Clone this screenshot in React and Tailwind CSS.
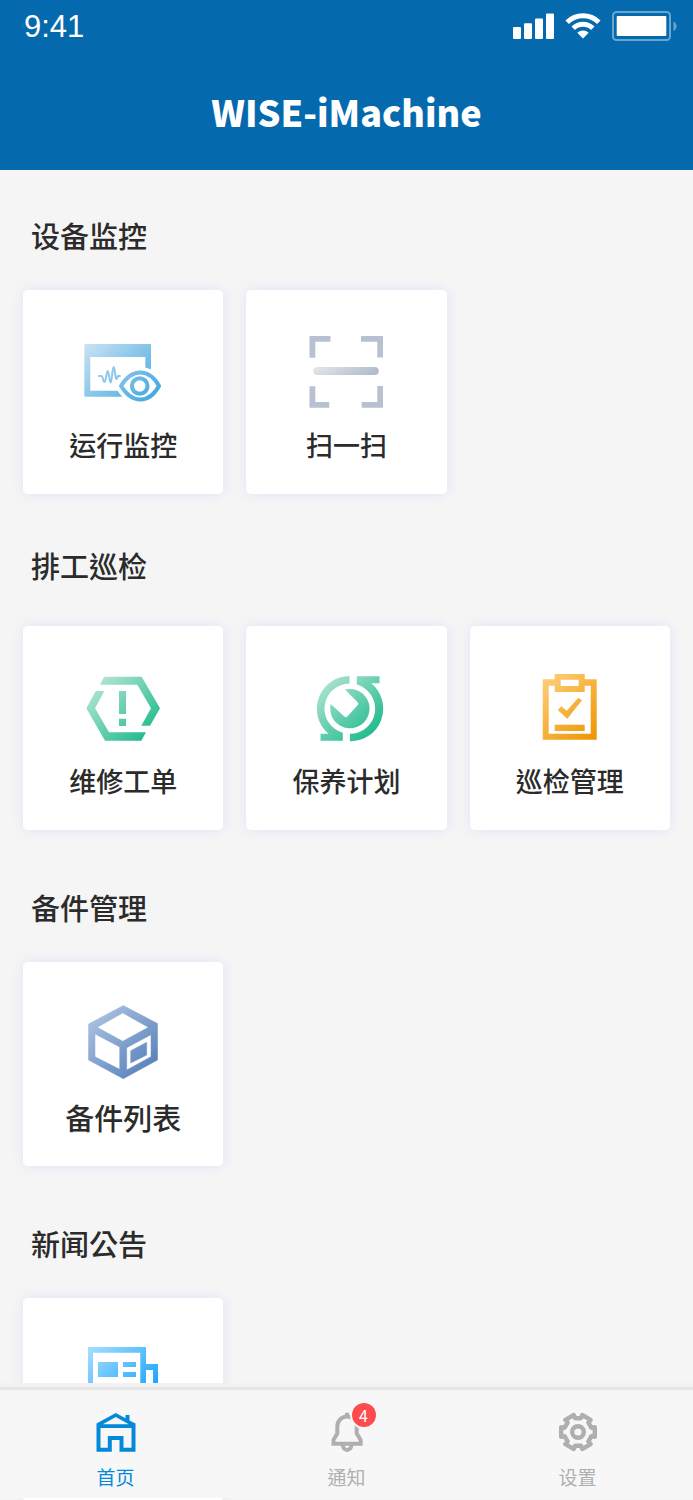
import React from 'react';

// Dégradé diagonal partagé par les icônes
const Gradient = ({ id, from, to }) => (
  <defs>
    <linearGradient id={id} x1="8" y1="8" x2="66" y2="70" gradientUnits="userSpaceOnUse">
      <stop offset="0" stopColor={from} />
      <stop offset="1" stopColor={to} />
    </linearGradient>
  </defs>
);

const IconBox = ({ children }) => (
  <svg viewBox="0 0 80 80" className="w-20 h-20" aria-hidden="true">
    {children}
  </svg>
);

const MonitorIcon = () => (
  <IconBox>
    <Gradient id="monitor" from="#c8e1f2" to="#42a8e0" />
    <path fill="url(#monitor)" fillRule="evenodd" d="M2.3 11H67a1 1 0 0 1 1 1v51.7H2.3a1 1 0 0 1-1-1V12a1 1 0 0 1 1-1zM7.3 24v33.7h55V24z" />
    <path fill="none" stroke="url(#monitor)" strokeWidth="2" strokeLinecap="round" strokeLinejoin="round" d="M16 43h2.500c1.500 0 1.500 6 3 6s2-11 3.200-11 1.700 11.500 3 11.500 1.500-15.500 3-15.500 1.200 12 2.600 12c1 0 1-3 2-3h1.500" />
    <path fill="#fff" stroke="#fff" strokeWidth="11" strokeLinejoin="round" d="M38 53C49 35 66 35 76 53C66 71 49 71 38 53z" />
    <path fill="none" stroke="url(#monitor)" strokeWidth="4" strokeLinejoin="round" d="M38 53C49 35 66 35 76 53C66 71 49 71 38 53z" />
    <circle cx="56.700" cy="53" r="7.800" fill="none" stroke="url(#monitor)" strokeWidth="4" />
  </IconBox>
);

const ScanIcon = () => (
  <IconBox>
    <defs>
      <linearGradient id="scan" x1="0" x2="1" y1="0" y2="0.200">
        <stop offset="0" stopColor="#e4e8ec" />
        <stop offset="1" stopColor="#b3bdcd" />
      </linearGradient>
    </defs>
    <path fill="#b8c1d1" d="M3.500 3h21v5.700H9.300v16H3.500zM55 3h22v21.500h-5.700V8.700H55zM3.500 53.300h5.800V69h14v5.700H3.500zM71.300 53h5.700v21.700H55.700V69h15.600z" />
    <rect x="7.200" y="34" width="65.600" height="8" rx="4" fill="url(#scan)" />
  </IconBox>
);

const RepairIcon = () => (
  <IconBox>
    <Gradient id="repair" from="#c0e9dc" to="#1cb98c" />
    <g fill="url(#repair)">
      <path d="M21 7.700H58.700L77 39.300L67 56.700H58.300L68 39.300L54.300 15.700H17z" />
      <path d="M12.700 22H21.300L12 39.300L26 63.300H63L58.300 71.700H22L3.300 39.300z" />
      <path d="M36 22h7v23h-7zM36 49.700h7V57h-7z" />
    </g>
  </IconBox>
);

const MaintainIcon = () => (
  <IconBox>
    <Gradient id="maintain" from="#c0e9dc" to="#1cb98c" />
    <g fill="url(#maintain)">
      <path d="M43.500 7v7.600A25 25 0 0 0 36.800 63.700V71.700H14.500V64.700H22.500A32.700 32.700 0 0 1 43.500 7z" />
      <path d="M43.900 72.300V64.700A25 25 0 0 0 50.800 15.600V7.300H73.500V14.300H65.200A32.700 32.700 0 0 1 43.900 72.300z" />
      <path d="M39 20.500A19.700 19.700 0 1 1 24.700 35L38.300 47.600q1.500 1.200 3 0L51.600 36.300q1.500-1.600 0-3.100z" />
    </g>
  </IconBox>
);

const InspectIcon = () => (
  <IconBox>
    <Gradient id="inspect" from="#ffd180" to="#ee9500" />
    <g fill="url(#inspect)">
      <path fillRule="evenodd" d="M12.700 10.300h12V5h30v5.300h12v60.400h-54zM30.700 10.700V17h18v-6.300zM18.700 16.700v48h42v-48h-6V23h-30v-6.300z" />
      <path d="M27.700 41L31.300 37.300L36.700 41.700L48.300 28.700L52 31.300L37.300 49.700z" />
      <path d="M24.700 55.700h30V62h-30z" />
    </g>
  </IconBox>
);

const PartsIcon = () => (
  <IconBox>
    <Gradient id="parts" from="#adc3e2" to="#5680ba" />
    <path
      fill="url(#parts)"
      fillRule="evenodd"
      stroke="url(#parts)"
      strokeWidth="0.500"
      d="M40.300 0.500L74.500 18.500V55L40.300 73.700L5.500 55V19zM39.700 8L14.300 22.300L39.700 36.300L65.300 22.300zM12 29V51.700L36.700 64.300V42zM68 29.700L43.700 42.700V65L68 51.700zM47.700 45.700L63.700 37.300V50L47.700 58z"
    />
  </IconBox>
);

const NewsIcon = () => (
  <IconBox>
    <Gradient id="news" from="#a3dbff" to="#009cf8" />
    <g fill="url(#news)">
      <path fillRule="evenodd" d="M5 6h58v17h12v49H5zM10 11.700V66h47.300V11.700zM63 29v37h7V29z" />
      <path d="M15 21h20v15H15zM40 21h13v5H40zM40 31h13v5H40zM15 44h38v5H15z" />
    </g>
  </IconBox>
);

const HomeIcon = () => (
  <svg viewBox="0 0 40 40" className="w-10 h-10" fill="currentColor" aria-hidden="true">
    <path
      fillRule="evenodd"
      d="M19.800 1L29.500 6.200V3h4v5.400L39.500 11.500V39.700H23.500V28H15.800V39.700H0.500V11.500zM19.800 5L6.800 12.200H32.800zM4.500 16V35.700H11.800V24H27.500V35.700H35.500V16z"
    />
  </svg>
);

const BellIcon = () => (
  <svg viewBox="0 0 40 40" className="w-10 h-10" fill="none" stroke="currentColor" strokeWidth="4" aria-hidden="true">
    <path d="M20 0.700V5M6.500 31.800V28L10.300 21.500V14.500A9.700 10 0 0 1 29.700 14.500V21.500L33.700 28V31.800z" />
    <path d="M15.800 33C16 39.500 24.200 39.500 24.400 33" />
  </svg>
);

// Contour de l'engrenage : six dents
const gearPoints = [0, 60, 120, 180, 240, 300]
  .flatMap((a) => [[a - 16, 17.5], [a + 16, 17.5], [a + 18, 14], [a + 42, 14]])
  .map(([a, r]) => {
    const rad = (a * Math.PI) / 180;
    return `${(20 + r * Math.cos(rad)).toFixed(1)},${(20 + r * Math.sin(rad)).toFixed(1)}`;
  })
  .join(' ');

const GearIcon = () => (
  <svg viewBox="0 0 40 40" className="w-10 h-10" fill="none" stroke="currentColor" strokeWidth="4.400" strokeLinejoin="round" aria-hidden="true">
    <polygon points={gearPoints} />
    <circle cx="20" cy="20" r="5.800" />
  </svg>
);

const sections = [
  {
    title: '设备监控',
    items: [
      { label: '运行监控', Icon: MonitorIcon },
      { label: '扫一扫', Icon: ScanIcon },
    ],
  },
  {
    title: '排工巡检',
    spaced: true,
    items: [
      { label: '维修工单', Icon: RepairIcon },
      { label: '保养计划', Icon: MaintainIcon },
      { label: '巡检管理', Icon: InspectIcon },
    ],
  },
  {
    title: '备件管理',
    items: [{ label: '备件列表', Icon: PartsIcon, large: true }],
  },
  {
    title: '新闻公告',
    items: [{ Icon: NewsIcon }],
  },
];

const tabs = [
  { label: '首页', Icon: HomeIcon, active: true },
  { label: '通知', Icon: BellIcon, badge: 4 },
  { label: '设置', Icon: GearIcon },
];

const StatusBar = () => (
  <div className="flex h-[52px] items-center justify-between pl-6 pr-4">
    <span className="font-['Liberation_Sans',sans-serif] text-[31px] leading-none">9:41</span>
    <div className="flex items-center gap-[11px]">
      <svg viewBox="0 0 42 26" className="w-[42px] h-[26px]" fill="currentColor" aria-hidden="true">
        <rect x="1" y="14" width="8" height="12" rx="1" />
        <rect x="12" y="10.300" width="8" height="15.700" rx="1" />
        <rect x="23" y="5.500" width="8" height="20.500" rx="1" />
        <rect x="34" y="0.500" width="8" height="25.500" rx="1" />
      </svg>
      <svg viewBox="0 0 36 26" className="w-9 h-[26px]" aria-hidden="true">
        <g fill="none" stroke="currentColor" strokeWidth="5">
          <path d="M2.200 9.200A22.500 22.500 0 0 1 33.800 9.200" />
          <path d="M8.200 15.300A14 14 0 0 1 27.800 15.300" />
        </g>
        <path fill="currentColor" d="M18 25.500L12.300 19.800A8 8 0 0 1 23.700 19.800z" />
      </svg>
      <svg viewBox="0 0 65 30" className="w-[65px] h-[30px]" aria-hidden="true">
        <rect x="1" y="1" width="57" height="28" rx="3.500" fill="none" stroke="currentColor" strokeOpacity="0.400" strokeWidth="2" />
        <rect x="4.700" y="5" width="49.600" height="20" rx="1" fill="currentColor" />
        <path fill="currentColor" fillOpacity="0.400" d="M61.500 10.500c4 1.500 4 8 0 9.500z" />
      </svg>
    </div>
  </div>
);

const Card = ({ label, Icon, large }) => (
  <button
    type="button"
    aria-label={label ? undefined : '新闻公告'}
    className="flex min-h-[204px] flex-col items-center rounded-[5px] bg-white pt-[43px] shadow-[0_0_12px_rgba(190,205,255,0.4)]"
  >
    <Icon />
    {label && (
      <span className={`mt-3 leading-10 font-medium ${large ? 'text-[29px]' : 'text-[27px]'}`}>{label}</span>
    )}
  </button>
);

const App = () => {
  return (
    <div className="h-screen overflow-hidden bg-[#f5f5f5] text-[#2b2b2b] font-['Noto_Sans_CJK_TC','Noto_Sans_CJK_SC',sans-serif]">
      <header className="bg-[#056aad] text-white">
        <StatusBar />
        <div className="flex h-[118px] items-center justify-center">
          <h1 className="text-[36px] leading-none font-black">WISE-iMachine</h1>
        </div>
      </header>

      <main className="px-[23px]">
        {sections.map(({ title, spaced, items }) => (
          <section key={title} className={spaced ? 'pt-[51px]' : 'pt-[45px] not-first:pt-[57px]'}>
            <h2 className={`pl-2 text-[29px] leading-10 font-medium ${spaced ? 'mb-[41px]' : 'mb-[35px]'}`}>
              {title}
            </h2>
            <div className="grid grid-cols-3 gap-[23px]">
              {items.map((item, i) => (
                <Card key={i} {...item} />
              ))}
            </div>
          </section>
        ))}
      </main>

      {/* Barre de navigation */}
      <nav className="fixed inset-x-0 bottom-0.5 border-t-4 border-[#f2f2f2] bg-[#f7f7f7]">
        <div className="grid grid-cols-3 border-t-3 border-[#e6e6e6] pt-[22px] pb-[9px]">
          {tabs.map(({ label, Icon, active, badge }) => (
            <a
              key={label}
              href="#"
              className={`flex flex-col items-center ${active ? 'text-[#0289da]' : 'text-[#afafaf]'}`}
            >
              <span className="relative">
                <Icon />
                {badge && (
                  <span className="absolute -top-[9px] left-[25px] flex h-6 w-6 items-center justify-center rounded-full bg-[#ff4d4f] text-base leading-none text-white ring-2 ring-[#f7f7f7]">
                    {badge}
                  </span>
                )}
              </span>
              <span className="mt-[13px] text-[19px] leading-6">{label}</span>
            </a>
          ))}
        </div>
      </nav>
    </div>
  );
};

export default App;
